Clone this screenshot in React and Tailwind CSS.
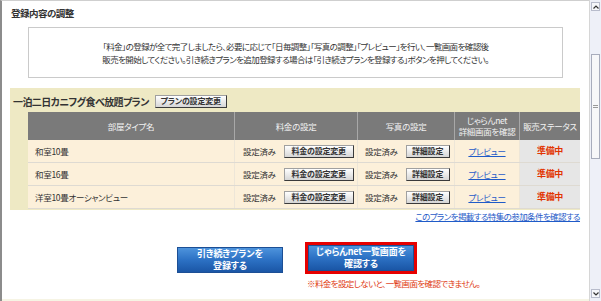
import React from "react";

const rooms = ["和室10畳", "和室16畳", "洋室10畳オーシャンビュー"];

const GrayButton = ({ children, w }) => (
  <span
    className={`inline-flex items-center justify-center h-[13px] ${w} border border-[#a0a0a0] border-r-[#3a3a3a] border-b-[#3a3a3a] bg-linear-to-b from-white to-[#d6d6d6] text-[8px] font-bold leading-none tracking-[-0.2px] text-[#333]`}
  >
    {children}
  </span>
);

const BlueButton = ({ children }) => (
  <div className="flex flex-col items-center justify-center w-[106px] h-[26px] border border-[#1c4f95] bg-linear-to-b from-[#4d93dc] via-[#2c71c4] to-[#1a56a6] text-white text-[9px] font-bold leading-[12px] tracking-[-0.1px] text-center">
    {children}
  </div>
);

const Scrollbar = () => (
  <div className="w-[12px] h-full flex flex-col border-l border-[#d6d6d6] bg-[#eef0f8]">
    <div className="mx-[1px] mt-[2px] h-[9px] flex items-center justify-center border border-[#b8bccc] bg-[#f6f7fb]">
      <svg width="6" height="4" viewBox="0 0 6 4">
        <path d="M0.5 3.5 L3 1 L5.5 3.5" fill="none" stroke="#333" strokeWidth="1.2" />
      </svg>
    </div>
    <div className="h-[43px]" />
    <div className="h-[105px] mx-[1px] border border-[#a8acbc] bg-[#f7f7f9] flex items-center justify-center">
      <div className="w-[5px] h-[3px] border-t border-b border-[#999]" />
    </div>
    <div className="flex-1" />
    <div className="mx-[1px] mb-[3px] h-[9px] flex items-center justify-center border border-[#b8bccc] bg-[#f6f7fb]">
      <svg width="6" height="4" viewBox="0 0 6 4">
        <path d="M0.5 0.5 L3 3 L5.5 0.5" fill="none" stroke="#333" strokeWidth="1.2" />
      </svg>
    </div>
  </div>
);

export default function App() {
  return (
    <div className="w-[601px] h-[301px] flex overflow-hidden bg-white text-[#333] font-['Noto_Sans_CJK_JP',sans-serif] [font-feature-settings:'palt']">
      <div className="w-[589px] h-full flex flex-col border-l-2 border-l-[#8c8c8c] border-t border-t-[#cfcfcf]">
        {/* title */}
        <div className="pl-[9px] pt-[6px] text-[9.5px] font-bold leading-[12px] tracking-[-0.5px]">登録内容の調整</div>

        {/* notice */}
        <div className="ml-[26px] mt-[8px] w-[535px] h-[51px] border border-[#cacaca] flex flex-col items-center justify-center text-[8.5px] leading-[13px] tracking-[-0.6px]">
          <p>「料金」の登録が全て完了しましたら、必要に応じて「日毎調整」「写真の調整」「プレビュー」を行い、一覧画面を確認後</p>
          <p>販売を開始してください。引き続きプランを追加登録する場合は「引き続きプランを登録する」ボタンを押してください。</p>
        </div>

        {/* plan */}
        <div className="ml-[8px] mt-[10px] w-[570px] bg-[#eee9c4] pt-[6px] pb-[1px]">
          <div className="flex items-center h-[14px] pl-[3px] gap-[6px]">
            <span className="text-[10px] font-bold tracking-[-0.6px]">一泊二日カニフグ食べ放題プラン</span>
            <GrayButton w="w-[72px]">プランの設定変更</GrayButton>
          </div>

          <div className="ml-[18px] mt-[4px] w-[552px] text-[8.5px] tracking-[-0.3px]">
            <div className="grid grid-cols-[207px_123px_97px_65px_60px] h-[28px] bg-[#7a7a7a] text-[#f2f2f2]">
              <div className="flex items-center justify-center border-r border-[#a8a8a8]">部屋タイプ名</div>
              <div className="flex items-center justify-center border-r border-[#a8a8a8]">料金の設定</div>
              <div className="flex items-center justify-center border-r border-[#a8a8a8]">写真の設定</div>
              <div className="flex flex-col items-center justify-center leading-[11px] border-r border-[#a8a8a8]">
                <span>じゃらんnet</span>
                <span>詳細画面を確認</span>
              </div>
              <div className="flex items-center justify-center">販売ステータス</div>
            </div>

            {rooms.map((room) => (
              <div
                key={room}
                className="grid grid-cols-[207px_123px_97px_65px_60px] h-[23px] bg-[#fcf0da] border-b border-[#dedad2]"
              >
                <div className="flex items-center pl-[7px] border-r border-[#ede6d8]">{room}</div>
                <div className="flex items-center pl-[8px] gap-[8px] border-r border-[#ede6d8]">
                  <span>設定済み</span>
                  <GrayButton w="w-[70px]">料金の設定変更</GrayButton>
                </div>
                <div className="flex items-center pl-[7px] gap-[8px] border-r border-[#ede6d8]">
                  <span>設定済み</span>
                  <GrayButton w="w-[44px]">詳細設定</GrayButton>
                </div>
                <div className="flex items-center justify-center border-r border-[#ede6d8]">
                  <a href="#" className="text-[#1f5bc8] underline">プレビュー</a>
                </div>
                <div className="flex items-center justify-center bg-[#e6e6e6] text-[#e23400] font-bold text-[9px]">準備中</div>
              </div>
            ))}
          </div>
        </div>

        {/* link */}
        <div className="flex justify-end pr-[9px] text-[8.5px] leading-[12px] tracking-[-0.6px]">
          <a href="#" className="text-[#1f5bc8] underline">このプランを掲載する特集の参加条件を確認する</a>
        </div>

        {/* actions */}
        <div className="mt-[20px] flex items-start pl-[175px] gap-[22px]">
          <div className="pt-[5px]">
            <BlueButton>
              <span>引き続きプランを</span>
              <span>登録する</span>
            </BlueButton>
          </div>
          <div className="flex flex-col items-start">
            <div className="border-[3px] border-[#e60000]">
              <BlueButton>
                <span>じゃらんnet一覧画面を</span>
                <span>確認する</span>
              </BlueButton>
            </div>
            <p className="mt-[3px] ml-[2px] text-[8.5px] leading-[12px] tracking-[-0.6px] text-[#e03c14] whitespace-nowrap">
              ※料金を設定しないと、一覧画面を確認できません。
            </p>
          </div>
        </div>

        <div className="mt-auto h-[2px] bg-[#f6f4e4]" />
      </div>
      <Scrollbar />
    </div>
  );
}
